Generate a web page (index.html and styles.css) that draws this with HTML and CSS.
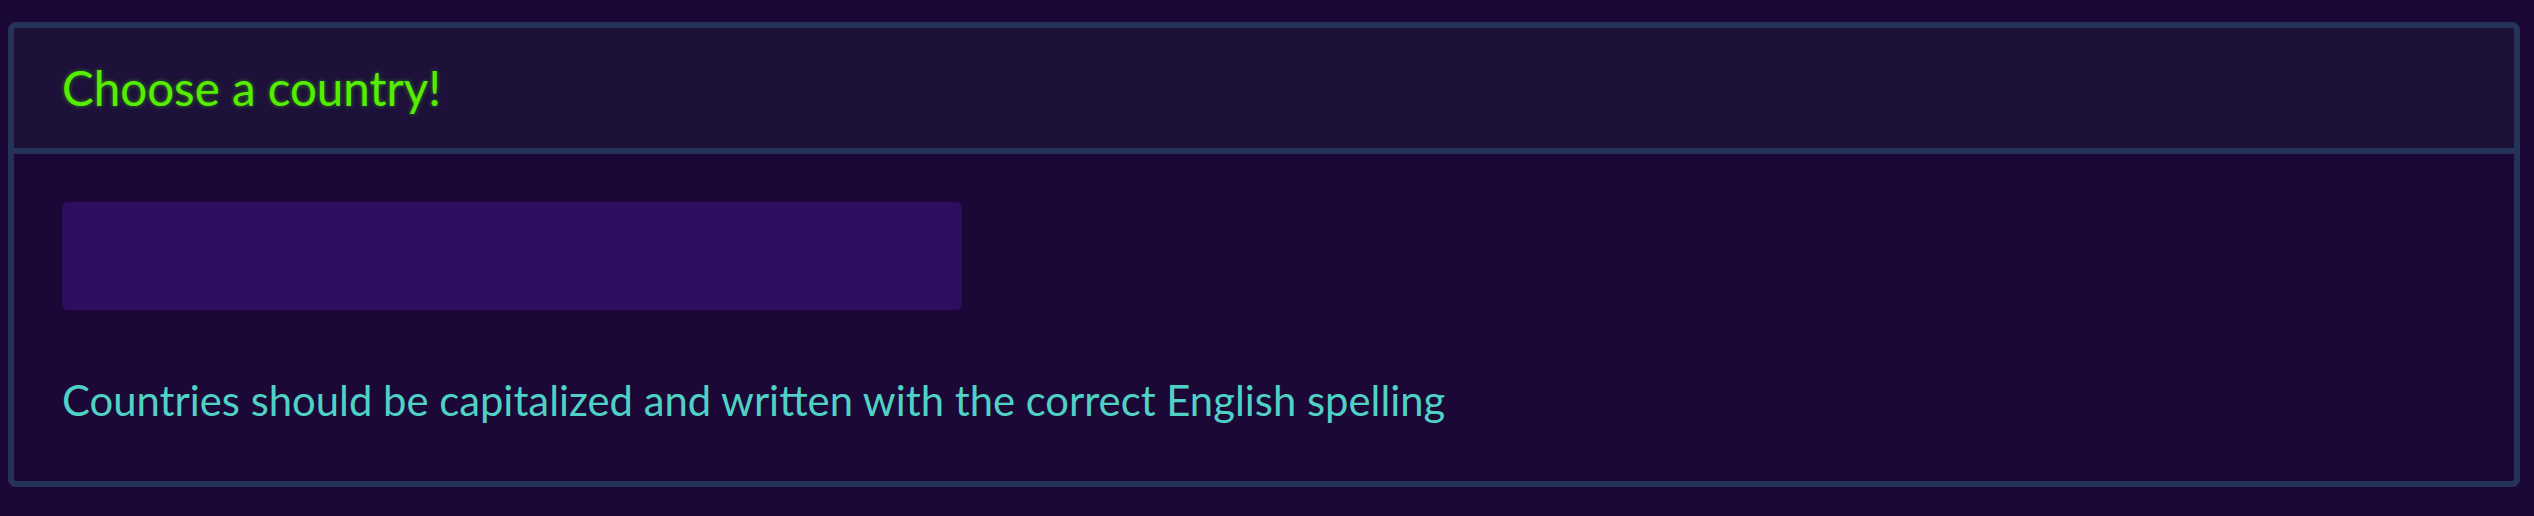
FILE: index.html
```html
<!DOCTYPE html>
<html lang="en">
<head>
<meta charset="utf-8">
<title>Choose a country</title>
<link rel="stylesheet" href="styles.css">
</head>
<body>
  <div class="card">
    <div class="card-header">
      <h1 class="title">Choose a country!</h1>
    </div>
    <div class="card-body">
      <input class="country-input" type="text" aria-label="Country">
      <p class="hint">Countries should be capitalized and written with the correct English spelling</p>
    </div>
  </div>
</body>
</html>
```

FILE: styles.css
```css
html, body {
  margin: 0;
  background: #1b0836;
}
body {
  padding: 22px 14px 0 8px;
  font-family: Lato, "Open Sans", sans-serif;
}
.card {
  border: 6px solid #263358;
  border-radius: 8px;
  background: #1b0836;
  overflow: hidden;
}
.card-header {
  background: #1d113a;
  border-bottom: 6px solid #263358;
  padding: 32px 48px;
}
.title {
  margin: 0;
  font-size: 47.5px;
  font-weight: 400;
  line-height: 56px;
  color: #55ee00;
  text-shadow: 0 0 4px rgba(85, 238, 0, 0.5);
}
.card-body {
  padding: 48px 48px 51px 48px;
}
.country-input {
  display: block;
  box-sizing: border-box;
  width: 900px;
  height: 108px;
  margin: 0;
  border: none;
  border-radius: 6px;
  background: #2e0e60;
  outline: none;
}
.hint {
  margin: 60px 0 0 0;
  font-size: 41.8px;
  line-height: 60px;
  color: #4fd1c5;
}
```
